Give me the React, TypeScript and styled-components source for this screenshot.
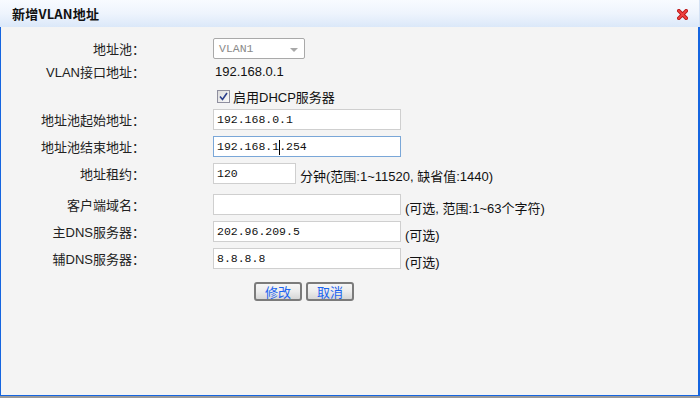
import React from "react";
import styled, { createGlobalStyle } from "styled-components";

const Global = createGlobalStyle`
  html, body { margin: 0; padding: 0; background: #9a9a9a; }
  body { width: 700px; height: 398px; overflow: hidden; }
  * { box-sizing: border-box; }
`;

const Window = styled.div`
  width: 700px;
  height: 396px;
  display: flex;
  flex-direction: column;
  background: #f4f4f4;
  font-family: "Liberation Sans", "Noto Sans CJK SC", sans-serif;
`;

const TitleBar = styled.div`
  height: 27px;
  flex-shrink: 0;
  display: flex;
  align-items: center;
  justify-content: space-between;
  padding: 0 10px 0 12px;
  background: linear-gradient(#f8fbff 0%, #eef4fd 50%, #dbe8f9 100%);
  border-right: 1px solid #d4e2f5;
`;

const Title = styled.div`
  font-family: "Noto Sans CJK SC", sans-serif;
  font-weight: 700;
  font-size: 13px;
  color: #111;
  letter-spacing: 0.2px;
  margin-top: -1px;
`;

const Close = styled.svg`
  width: 11px;
  height: 11px;
  margin-top: 1px;
  margin-right: 1px;
`;

const Body = styled.div`
  flex: 1;
  border-left: 1px solid #1565e0;
  border-right: 2px solid #1565e0;
  border-bottom: 1px solid #1565e0;
  padding-top: 11px;
  display: flex;
  flex-direction: column;
`;

const Row = styled.div<{ $h: number; $mt: number }>`
  display: flex;
  align-items: center;
  height: ${(p) => p.$h}px;
  margin-top: ${(p) => p.$mt}px;
`;

const Label = styled.div`
  width: 144px;
  flex-shrink: 0;
  margin-right: 68px;
  text-align: right;
  font-size: 13px;
  color: #222;
  white-space: nowrap;
`;

const Select = styled.div`
  width: 92px;
  height: 21px;
  border: 1px solid #a9a9a9;
  border-radius: 2px;
  background: #fff;
  display: flex;
  align-items: center;
  justify-content: space-between;
  padding: 0 6px 0 5px;
  font-family: "Liberation Mono", monospace;
  font-size: 11.5px;
  color: #8a8a8a;
`;

const Arrow = styled.span`
  width: 0;
  height: 0;
  border-left: 4px solid transparent;
  border-right: 4px solid transparent;
  border-top: 4px solid #a8a8a8;
  margin-top: 2px;
`;

const Value = styled.span`
  font-size: 13px;
  color: #111;
  margin-left: 2px;
`;

const CheckWrap = styled.label`
  display: flex;
  align-items: center;
  gap: 3px;
  margin-left: 4px;
  font-size: 13px;
  color: #111;
`;

const Box = styled.span`
  width: 13px;
  height: 13px;
  border: 1px solid #8f8f9f;
  background: linear-gradient(135deg, #dcdcdc, #fafafa);
  display: flex;
  align-items: center;
  justify-content: center;
`;

const Input = styled.div<{ $w: number; $focus?: boolean }>`
  width: ${(p) => p.$w}px;
  height: 21px;
  border: 1px solid ${(p) => (p.$focus ? "#7aa7d8" : "#cfcfcf")};
  background: #fff;
  display: flex;
  align-items: center;
  padding: 0 3px;
  font-family: "Liberation Mono", monospace;
  font-size: 11.5px;
  color: #111;
  white-space: pre;
  flex-shrink: 0;
`;

const Caret = styled.span`
  display: inline-block;
  width: 1px;
  height: 15px;
  background: #000;
  margin: 0 -1px 0 0;
  position: relative;
  top: 1px;
`;

const Hint = styled.span<{ $dy: number }>`
  font-size: 13px;
  color: #111;
  margin-left: 4px;
  margin-top: ${(p) => p.$dy}px;
  white-space: nowrap;
`;

const Buttons = styled.div`
  display: flex;
  gap: 4px;
  margin-top: 13px;
  margin-left: 253px;
`;

const Button = styled.button`
  width: 48px;
  height: 19px;
  border: 2px solid #7b7b7b;
  border-radius: 3px;
  background: linear-gradient(#f6f6f6 0%, #ececec 50%, #d6d6d6 100%);
  color: #1b63f0;
  font-family: "Noto Sans CJK SC", sans-serif;
  font-size: 13px;
  line-height: 13px;
  padding: 0;
  display: flex;
  align-items: center;
  justify-content: center;
`;

export default function App() {
  return (
    <>
      <Global />
      <Window>
        <TitleBar>
          <Title>新增VLAN地址</Title>
          <Close viewBox="0 0 12 12">
            <path d="M2 2 L10 10 M10 2 L2 10" stroke="#b81818" strokeWidth="4" strokeLinecap="square" />
            <path d="M2 2 L10 10 M10 2 L2 10" stroke="#f04040" strokeWidth="2" strokeLinecap="square" />
          </Close>
        </TitleBar>
        <Body>
          <Row $h={21} $mt={0}>
            <Label>地址池：</Label>
            <Select>
              VLAN1
              <Arrow />
            </Select>
          </Row>
          <Row $h={21} $mt={2}>
            <Label>VLAN接口地址：</Label>
            <Value>192.168.0.1</Value>
          </Row>
          <Row $h={21} $mt={4}>
            <Label />
            <CheckWrap>
              <Box>
                <svg width="9" height="9" viewBox="0 0 9 9">
                  <path d="M1 4.5 L3.5 7.5 L8 1" fill="none" stroke="#2b3f8c" strokeWidth="1.6" />
                </svg>
              </Box>
              启用DHCP服务器
            </CheckWrap>
          </Row>
          <Row $h={21} $mt={2}>
            <Label>地址池起始地址：</Label>
            <Input $w={188}>192.168.0.1</Input>
          </Row>
          <Row $h={21} $mt={6}>
            <Label>地址池结束地址：</Label>
            <Input $w={188} $focus>
              192.168.1<Caret />.254
            </Input>
          </Row>
          <Row $h={21} $mt={6}>
            <Label>地址租约：</Label>
            <Input $w={83}>120</Input>
            <Hint $dy={3}>分钟(范围:1~11520, 缺省值:1440)</Hint>
          </Row>
          <Row $h={21} $mt={10}>
            <Label>客户端域名：</Label>
            <Input $w={188}></Input>
            <Hint $dy={6}>(可选, 范围:1~63个字符)</Hint>
          </Row>
          <Row $h={21} $mt={6}>
            <Label>主DNS服务器：</Label>
            <Input $w={188}>202.96.209.5</Input>
            <Hint $dy={6}>(可选)</Hint>
          </Row>
          <Row $h={21} $mt={6}>
            <Label>辅DNS服务器：</Label>
            <Input $w={188}>8.8.8.8</Input>
            <Hint $dy={6}>(可选)</Hint>
          </Row>
          <Buttons>
            <Button>修改</Button>
            <Button>取消</Button>
          </Buttons>
        </Body>
      </Window>
    </>
  );
}
